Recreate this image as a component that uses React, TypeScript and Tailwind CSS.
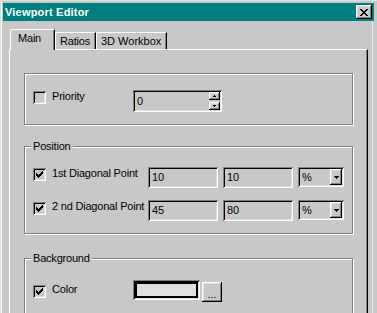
import React from "react";

const SUNKEN =
  "shadow-[inset_1px_1px_0_#808080,inset_-1px_-1px_0_#ffffff,inset_2px_2px_0_#000000,inset_-2px_-2px_0_#dfdfdf]";
const RAISED =
  "shadow-[inset_-1px_-1px_0_#000000,inset_1px_1px_0_#ffffff,inset_-2px_-2px_0_#808080,inset_2px_2px_0_#dfdfdf]";
const ETCHED = "border border-[#808080] shadow-[inset_1px_1px_0_#ffffff,1px_1px_0_#ffffff]";

function CheckMark() {
  const px: [number, number, number][] = [
    [6, 0, 1],
    [5, 1, 2],
    [0, 2, 1],
    [4, 2, 3],
    [0, 3, 2],
    [3, 3, 3],
    [0, 4, 5],
    [1, 5, 3],
    [2, 6, 1],
  ];
  return (
    <svg width="7" height="7" viewBox="0 0 7 7" shapeRendering="crispEdges" className="absolute left-[3px] top-[3px]">
      {px.map(([x, y, w], i) => (
        <rect key={i} x={x} y={y} width={w} height={1} fill="#000" />
      ))}
    </svg>
  );
}

function Check({ checked }: { checked?: boolean }) {
  return (
    <div className={`relative w-[13px] h-[13px] shrink-0 bg-[#c8c8c8] ${SUNKEN}`}>
      {checked && <CheckMark />}
    </div>
  );
}

function Label({ children }: { children: React.ReactNode }) {
  return (
    <span className="ml-[6px] text-[11px] leading-[13px] tracking-[-0.2px] whitespace-nowrap text-black">
      {children}
    </span>
  );
}

function CloseGlyph() {
  const rows: [number, number][][] = [
    [[0, 2], [6, 2]],
    [[1, 2], [5, 2]],
    [[2, 4]],
    [[3, 2]],
    [[2, 4]],
    [[1, 2], [5, 2]],
    [[0, 2], [6, 2]],
  ];
  return (
    <svg width="8" height="7" viewBox="0 0 8 7" shapeRendering="crispEdges">
      {rows.map((r, y) =>
        r.map(([x, w], i) => <rect key={`${y}-${i}`} x={x} y={y} width={w} height={1} fill="#000" />)
      )}
    </svg>
  );
}

function Arrow({ up, w = 5 }: { up?: boolean; w?: number }) {
  const h = Math.ceil(w / 2);
  const rects = [];
  for (let i = 0; i < h; i++) {
    const width = w - 2 * i;
    const y = up ? h - 1 - i : i;
    rects.push(<rect key={i} x={i} y={y} width={width} height={1} fill="#000" />);
  }
  return (
    <svg width={w} height={h} viewBox={`0 0 ${w} ${h}`} shapeRendering="crispEdges">
      {rects}
    </svg>
  );
}

function Field({ value, w }: { value: string; w: string }) {
  return (
    <div className={`${w} h-[21px] flex items-center pl-[4px] bg-[#c8c8c8] ${SUNKEN}`}>
      <span className="text-[11px] leading-[13px]">{value}</span>
    </div>
  );
}

function Combo() {
  return (
    <div className={`w-[46px] h-[20px] flex items-center pl-[4px] pr-[2px] bg-[#c8c8c8] ${SUNKEN}`}>
      <span className="flex-1 text-[11px] leading-[13px]">%</span>
      <div className={`w-[12px] h-[16px] flex items-center justify-center bg-[#c8c8c8] ${RAISED}`}>
        <Arrow w={5} />
      </div>
    </div>
  );
}

export default function App() {
  return (
    <div className="w-[377px] h-[313px] overflow-hidden bg-[#c8c8c8] flex flex-col border-t border-l border-[#dfdfdf] pt-[2px] pl-[2px] pr-[3px] shadow-[inset_1px_0_0_#ffffff,inset_-4px_0_0_#c8c8c8,inset_-5px_0_0_#e8e8e8] font-['Liberation_Sans',Arial,sans-serif] text-black">
      {/* Title bar */}
      <div className="h-[18px] shrink-0 bg-[#008080] flex items-center justify-between pl-[2px] pr-[2px]">
        <span className="text-white font-bold text-[11px] leading-[13px] tracking-[0.2px]">Viewport Editor</span>
        <div className={`w-[16px] h-[14px] flex items-center justify-center bg-[#c8c8c8] ${RAISED}`}>
          <CloseGlyph />
        </div>
      </div>

      {/* Tabs */}
      <div className="ml-[6px] mt-[8px] h-[20px] shrink-0 flex items-end">
        <div className="relative z-10 ml-[1px] w-[45px] h-[21px] -mb-[1px] bg-[#c8c8c8] border-t border-l border-t-white border-l-white border-r border-r-black shadow-[inset_-1px_0_0_#808080] rounded-tl-[2px] pt-[2px] pl-[7px] text-[11px] leading-[13px] tracking-[-0.2px]">
          Main
        </div>
        <div className="w-[41px] h-[17px] bg-[#c8c8c8] border-t border-l border-t-white border-l-white border-r border-r-black shadow-[inset_-1px_0_0_#808080] rounded-tl-[2px] pt-[2px] pl-[4px] text-[11px] leading-[13px] tracking-[-0.2px]">
          Ratios
        </div>
        <div className="w-[71px] h-[17px] bg-[#c8c8c8] border-t border-l border-t-white border-l-white border-r border-r-black shadow-[inset_-1px_0_0_#808080] rounded-tl-[2px] pt-[2px] pl-[4px] text-[11px] leading-[13px] whitespace-nowrap">
          3D Workbox
        </div>
      </div>

      {/* Panel */}
      <div className="ml-[6px] w-[359px] flex-1 border-t border-l border-r border-t-white border-l-white border-r-black shadow-[inset_-1px_0_0_#808080] pl-[14px] flex flex-col">
        {/* Priority box */}
        <div className={`mt-[23px] w-[329px] h-[52px] shrink-0 ${ETCHED} pt-[16px] pl-[8px]`}>
          <div className="flex items-start">
            <div className="w-[100px] flex items-start">
              <div className="mt-[1px]">
                <Check />
              </div>
              <Label>Priority</Label>
            </div>
            <div className={`w-[89px] h-[22px] flex items-center pl-[4px] pr-[2px] bg-[#c8c8c8] ${SUNKEN}`}>
              <span className="flex-1 text-[11px] leading-[13px]">0</span>
              <div className="flex flex-col gap-[2px]">
                <div className={`w-[11px] h-[8px] flex items-center justify-center bg-[#c8c8c8] ${RAISED}`}>
                  <Arrow up w={3} />
                </div>
                <div className={`w-[11px] h-[8px] flex items-center justify-center bg-[#c8c8c8] ${RAISED}`}>
                  <Arrow w={3} />
                </div>
              </div>
            </div>
          </div>
        </div>

        {/* Position box */}
        <div className={`relative mt-[21px] w-[329px] h-[88px] shrink-0 ${ETCHED} pt-[20px] pl-[8px]`}>
          <span className="absolute -top-[7px] left-[6px] px-[2px] bg-[#c8c8c8] text-[11px] leading-[13px] tracking-[-0.2px]">
            Position
          </span>
          <div className="flex items-start">
            <div className="w-[115px] flex items-start">
              <div className="mt-[1px]">
                <Check checked />
              </div>
              <Label>1st Diagonal Point</Label>
            </div>
            <div className="flex gap-[5px]">
              <Field value="10" w="w-[70px]" />
              <Field value="10" w="w-[70px]" />
              <Combo />
            </div>
          </div>
          <div className="flex items-start mt-[12px]">
            <div className="w-[115px] flex items-start">
              <div className="mt-[2px]">
                <Check checked />
              </div>
              <Label>2 nd Diagonal Point</Label>
            </div>
            <div className="flex gap-[5px]">
              <Field value="45" w="w-[70px]" />
              <Field value="80" w="w-[70px]" />
              <Combo />
            </div>
          </div>
        </div>

        {/* Background box */}
        <div className={`relative mt-[24px] w-[329px] h-[90px] shrink-0 ${ETCHED} pt-[21px] pl-[8px]`}>
          <span className="absolute -top-[7px] left-[6px] px-[2px] bg-[#c8c8c8] text-[11px] leading-[13px] tracking-[-0.2px]">
            Background
          </span>
          <div className="flex items-start">
            <div className="w-[100px] flex items-start pt-[3px]">
              <div className="mt-[2px]">
                <Check checked />
              </div>
              <Label>Color</Label>
            </div>
            <div className={`w-[67px] h-[20px] p-[2px] ${SUNKEN}`}>
              <div className="w-full h-full border-2 border-black bg-[#e0e0e0]" />
            </div>
            <div className={`ml-[2px] mt-[2px] w-[20px] h-[20px] flex items-end justify-center pb-[4px] bg-[#c8c8c8] ${RAISED} text-[11px] leading-[8px]`}>
              ...
            </div>
          </div>
        </div>
      </div>
    </div>
  );
}
